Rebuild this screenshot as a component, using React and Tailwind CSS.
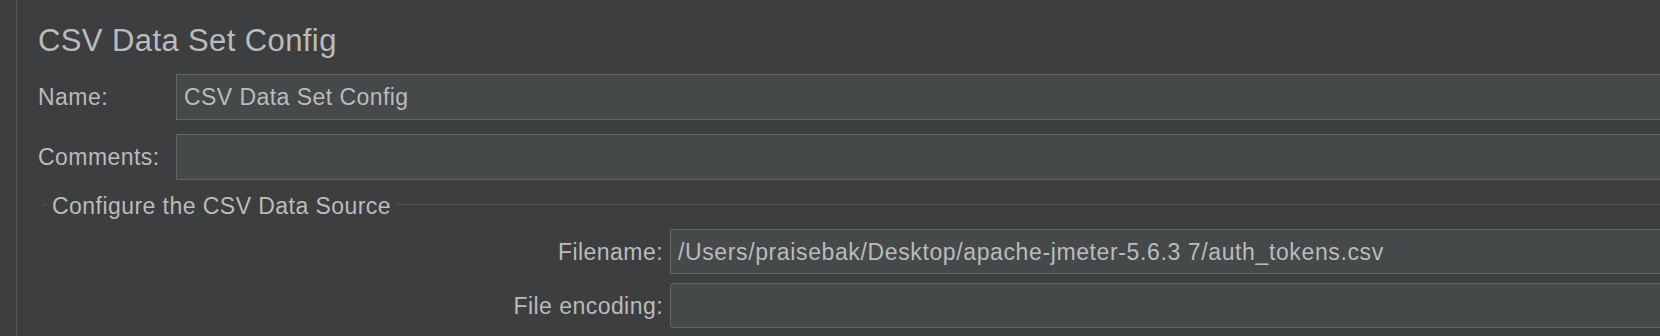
function Field({ value, className = "" }) {
  return (
    <div
      className={`flex min-w-0 flex-1 items-center whitespace-nowrap border border-r-0 border-[#646464] bg-[#45494a] pl-[7px] text-[#bbbbbb] ${className}`}
    >
      {value}
    </div>
  );
}

function Row({ label, value, labelClass, fieldClass }) {
  return (
    <div className="flex items-stretch">
      <div className={`flex shrink-0 items-center whitespace-nowrap ${labelClass}`}>{label}</div>
      <Field value={value} className={fieldClass} />
    </div>
  );
}

export default function App() {
  return (
    <div className="flex h-[336px] w-full overflow-hidden bg-[#3c3e40] font-['Liberation_Sans',Arial,sans-serif] text-[23px] leading-[28px] tracking-[0.45px] text-[#bbbbbb]">
      {/* left gutter + divider */}
      <div className="w-[16px] shrink-0" />
      <div className="w-px shrink-0 bg-[#555658]" />

      <div className="min-w-0 flex-1 pl-[21px] pt-[23px]">
        <h1 className="text-[31px] leading-[36px] font-normal tracking-[0.4px]">CSV Data Set Config</h1>

        {/* name / comments */}
        <div className="mt-[15px] flex flex-col gap-[14px]">
          <Row label="Name:" value="CSV Data Set Config" labelClass="w-[138px]" fieldClass="h-[46px]" />
          <Row label="Comments:" value="" labelClass="w-[138px]" fieldClass="h-[46px]" />
        </div>

        {/* titled border */}
        <div className="mt-[12px] flex h-[28px] items-start">
          <div className="ml-[4px] mt-[12px] h-px w-[5px] shrink-0 bg-[#505153]" />
          <span className="ml-[5px] whitespace-nowrap">Configure the CSV Data Source</span>
          <div className="ml-[5px] mt-[12px] h-px flex-1 bg-[#505153]" />
        </div>

        {/* csv source fields */}
        <div className="mt-[9px] flex flex-col gap-[9px]">
          <Row
            label="Filename:"
            value={<span className="tracking-[0.62px]">/Users/praisebak/Desktop/apache-jmeter-5.6.3 7/auth_tokens.csv</span>}
            labelClass="w-[632px] justify-end pr-[7px]"
            fieldClass="h-[45px]"
          />
          <Row
            label="File encoding:"
            value=""
            labelClass="w-[632px] justify-end pr-[7px]"
            fieldClass="h-[45px] rounded-l-[4px]"
          />
        </div>
      </div>
    </div>
  );
}
